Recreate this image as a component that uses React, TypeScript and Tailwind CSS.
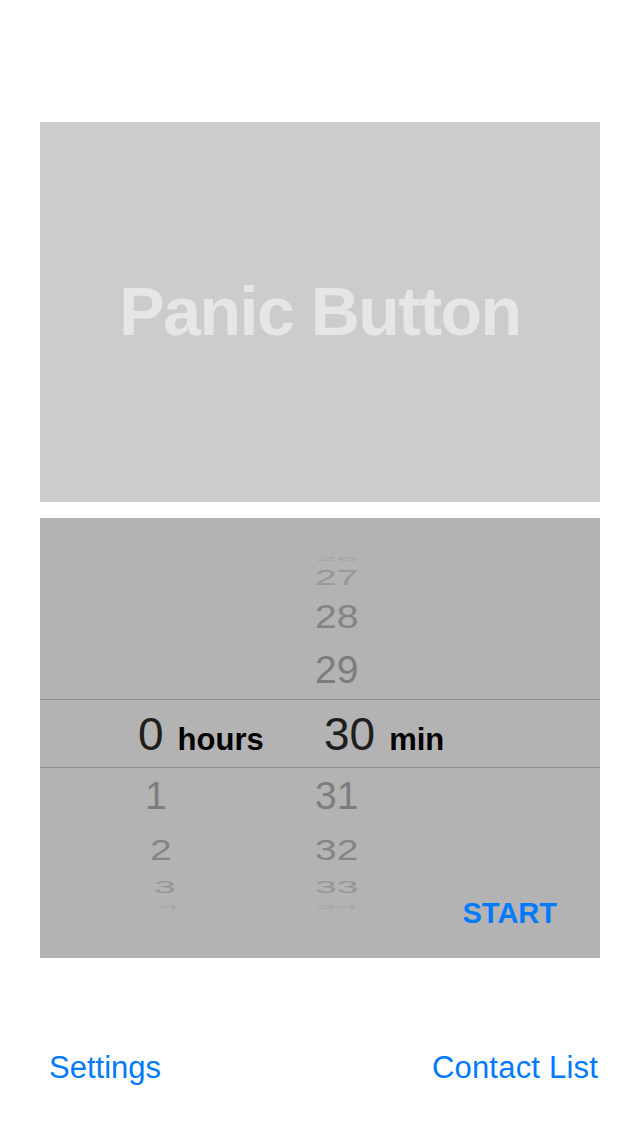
import React from "react";

const font = { fontFamily: '"Liberation Sans", Arial, sans-serif' };

export default function App() {
  return (
    <div className="w-[640px] h-[1136px] bg-white flex flex-col" style={font}>
      {/* Panic button */}
      <div className="mt-[122px] mx-[40px] h-[380px] bg-[#cccccc] flex items-center justify-center">
        <span className="text-[68px] leading-none font-bold text-[#e6e6e6] tracking-[-1.5px] -mt-[2px]">
          Panic Button
        </span>
      </div>

      {/* Picker */}
      <div className="relative mt-[16px] mx-[40px] h-[440px] bg-[#b3b3b3] flex flex-col pt-[37px] overflow-hidden">
        {/* 26 */}
        <div className="h-[7px] flex items-center">
          <div className="w-[275px]" />
          <span className="text-[39px] leading-none text-[#a6a6a6] scale-y-[0.15]">26</span>
        </div>
        {/* 27 */}
        <div className="h-[31px] flex items-center">
          <div className="w-[275px]" />
          <span className="text-[39px] leading-none text-[#979797] scale-y-[0.57]">27</span>
        </div>
        {/* 28 */}
        <div className="h-[47px] flex items-center">
          <div className="w-[275px]" />
          <span className="text-[39px] leading-none text-[#838383] scale-y-[0.86]">28</span>
        </div>
        {/* 29 */}
        <div className="h-[59px] flex items-center">
          <div className="w-[275px]" />
          <span className="text-[39px] leading-none text-[#7d7d7d]">29</span>
        </div>
        {/* selected */}
        <div className="h-[69px] border-y border-[#8e8e8e] flex items-center">
          <div className="w-[275px] pl-[98px] flex items-baseline">
            <span className="text-[46px] leading-none text-[#1e1e1e]">0</span>
            <span className="ml-[14px] text-[31px] leading-none font-bold text-black">hours</span>
          </div>
          <div className="pl-[9px] flex items-baseline">
            <span className="text-[46px] leading-none text-[#1e1e1e]">30</span>
            <span className="ml-[14px] text-[31px] leading-none font-bold text-black">min</span>
          </div>
        </div>
        {/* 31 */}
        <div className="h-[55px] flex items-center">
          <div className="w-[275px] pl-[105px] flex">
            <span className="text-[39px] leading-none text-[#7d7d7d]">1</span>
          </div>
          <span className="text-[39px] leading-none text-[#7d7d7d]">31</span>
        </div>
        {/* 32 */}
        <div className="h-[53px] flex items-center">
          <div className="w-[275px] pl-[110px] flex">
            <span className="text-[39px] leading-none text-[#858585] scale-y-[0.75]">2</span>
          </div>
          <span className="text-[39px] leading-none text-[#858585] scale-y-[0.75]">32</span>
        </div>
        {/* 33 */}
        <div className="h-[23px] flex items-center">
          <div className="w-[275px] pl-[114px] flex">
            <span className="text-[39px] leading-none text-[#969696] scale-y-[0.43]">3</span>
          </div>
          <span className="text-[39px] leading-none text-[#969696] scale-y-[0.43]">33</span>
        </div>
        {/* 34 */}
        <div className="h-[17px] flex items-center">
          <div className="w-[275px] pl-[118px] flex">
            <span className="text-[39px] leading-none text-[#a6a6a6] scale-y-[0.12]">4</span>
          </div>
          <span className="text-[39px] leading-none text-[#a6a6a6] scale-y-[0.12]">34</span>
        </div>

        <button className="absolute right-[43px] bottom-[30px] text-[29px] leading-none font-bold text-[#007aff]">
          START
        </button>
      </div>

      {/* Bottom links */}
      <div className="mt-[94px] pl-[49px] pr-[42px] flex justify-between items-start">
        <span className="text-[31px] leading-none text-[#007aff]">Settings</span>
        <span className="text-[31px] leading-none text-[#007aff] tracking-[0.2px]">Contact List</span>
      </div>
    </div>
  );
}
